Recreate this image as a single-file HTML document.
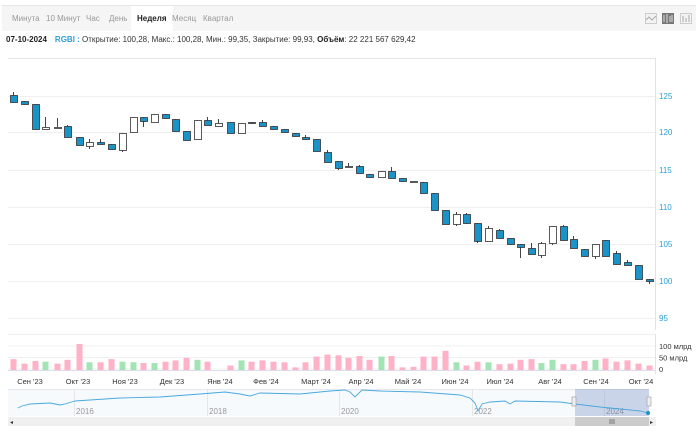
<!DOCTYPE html>
<html><head><meta charset="utf-8"><style>
body{margin:0;width:700px;height:432px;background:#fff;font-family:"Liberation Sans",sans-serif;overflow:hidden;position:relative}
.tabs{position:absolute;left:2px;top:5px;width:694px;height:25px;background:#f5f5f5;border-top:1px solid #e6e6e6}
.tabs span{position:absolute;top:8px;font-size:8px;color:#999}
.tabs span.a{background:#fff;color:#222;font-weight:bold;top:0;height:17px;padding:8px 6px 0;margin-left:-6px}
.info{position:absolute;left:6px;top:35px;font-size:8px;color:#333}
.info b{color:#222}
.info .t{color:#2aa0d8;font-weight:bold;margin-left:8px}
</style></head><body>
<div class="tabs">
<span style="left:10px">Минута</span><span style="left:44px">10 Минут</span><span style="left:84px">Час</span><span style="left:107px">День</span><span class="a" style="left:135px">Неделя</span><span style="left:170px">Месяц</span><span style="left:201px">Квартал</span>
<svg style="position:absolute;left:643px;top:7px" width="50" height="12">
<rect x="0.5" y="0.5" width="11" height="10" fill="#f3f3f3" stroke="#ccc"/><path d="M1 7 L4 4 L7 7 L11 3" fill="none" stroke="#aaa"/>
<rect x="17" y="0" width="12" height="11" fill="#777"/><path d="M19 2v7M22 1v9M25 3v6M27 2v7" stroke="#ddd"/>
<rect x="35.5" y="0.5" width="11" height="10" fill="#f3f3f3" stroke="#ccc"/><path d="M38 3v6M41 5v4M44 2v7" stroke="#aaa"/>
</svg>
</div>
<div class="info"><b>07-10-2024</b><span class="t">RGBI :</span> Открытие: 100,28, Макс.: 100,28, Мин.: 99,35, Закрытие: 99,93, <b>Объём</b>: 22 221 567 629,42</div>
<svg id="c" style="position:absolute;left:0;top:0" width="700" height="432" font-family="Liberation Sans, sans-serif"></svg>
<script>
var s='';
s+='<line x1="8" y1="58.5" x2="655" y2="58.5" stroke="#e6e6e6"/>';
s+='<line x1="655.5" y1="58" x2="655.5" y2="330" stroke="#d8e4f0"/>';
var lv=[[125,96],[120,132],[115,170],[110,207],[105,244],[100,281],[95,318]];
lv.forEach(function(l){s+='<line x1="8" y1="'+l[1]+'.5" x2="655" y2="'+l[1]+'.5" stroke="#efefef"/><text x="659" y="'+(l[1]+3)+'" font-size="8" fill="#2aa0d8">'+l[0]+'</text>';});
var C=[[13,95,102,92,102,1],[24,101,104,101,104,1],[35,104,129,104,129,1],[45,127,129,117,129,0],[57,127,127.5,118,127,2],[67,126,137,125,137,1],[79,137,145,137,145,1],[89,142,146,139,149,0],[100,142,144,139,144,1],[111,144,149,144,149,1],[122,133,150,133,152,0],[133,117,132,117,132,0],[143,117,121,117,127,1],[154,114,122,114,122,0],[165,114,118,114,118,1],[175,119,131,119,131,1],[186,131,140,131,140,1],[197,120,139,120,139,0],[207,120,125,117,125,1],[218,123,126,119,126,0],[230,122,133,122,133,1],[241,123,133,123,133,0],[251,122,123,122,123,1],[262,122,126,120,126,1],[273,126,129,126,129,1],[284,129,132,129,132,1],[295,133,136,133,136,1],[305,137,139,135,139,1],[316,139,151,139,151,1],[327,152,162,150,162,1],[338,161,168,161,170,1],[348,166,167,163,167,2],[359,166,173,165,173,1],[369,174,177,174,177,1],[381,171,177,171,177,0],[391,171,178,167,178,1],[402,178,181,178,181,1],[413,181,182,181,182,2],[423,182,193,182,193,1],[434,193,210,193,210,1],[445,210,224,210,224,1],[456,214,224,212,226,0],[466,214,223,213,224,1],[477,223,241,223,243,1],[488,228,241,226,241,0],[499,230,238,229,238,1],[510,238,244,238,244,1],[520,244,247,244,258,1],[531,248,254,243,254,1],[541,243,255,242,258,0],[552,226,243,226,245,0],[563,226,240,225,240,1],[573,239,248,236,248,1],[584,249,256,249,256,1],[595,244,256,244,259,0],[605,240,256,240,256,1],[616,253,264,251,264,1],[627,262,265,260,265,1],[638,265,279,265,279,1],[649,279,281,279,284,1]];
C.forEach(function(c){var x=c[0];s+='<line x1="'+(x+0.5)+'" y1="'+c[3]+'" x2="'+(x+0.5)+'" y2="'+c[4]+'" stroke="#444"/>';
var h=Math.max(c[2]-c[1],1);s+='<rect x="'+(x-3)+'.5" y="'+c[1]+'.5" width="7" height="'+h+'" fill="'+(c[5]==1?'#1a93c8':'#fff')+'" stroke="#333" stroke-width="0.8"/>';});
s+='<line x1="8" y1="334.5" x2="655" y2="334.5" stroke="#eee"/><line x1="655.5" y1="334" x2="655.5" y2="374" stroke="#d8e4f0"/>';
[[346,'100 млрд'],[357.5,'50 млрд'],[369,'0']].forEach(function(l){s+='<line x1="8" y1="'+l[0]+'" x2="655" y2="'+l[0]+'" stroke="#f0f0f0"/><text x="659" y="'+(l[0]+3)+'" font-size="7.5" fill="#333">'+l[1]+'</text>';});
var V=[10.9,6.4,9,8.3,6.4,10.2,26,7.7,7.7,10.9,8.3,7.7,7,7,8.3,9.6,12.2,10.2,8.3,0,4.5,9.6,8.3,9.6,8.3,7.7,2.6,7.7,13.4,15.4,14.7,12.2,14,10.2,13.4,14,2.6,3.2,13.4,13.4,19.2,7.7,4.5,8.3,7.7,5.8,6.4,10.2,10.9,7,10.2,5.8,5.8,9,10.2,11.5,8.3,9.6,6.4,4.5];
V.forEach(function(h,i){var c=C[i];var col=c[5]==0?'#a2e4b3':'#ffb2c7';s+='<rect x="'+(c[0]-2.5)+'" y="'+(370-h)+'" width="6" height="'+h+'" fill="'+col+'"/>';});
s+='<line x1="8" y1="370.5" x2="655" y2="370.5" stroke="#dde"/>';
var M=[[30,"Сен '23"],[78,"Окт '23"],[125,"Ноя '23"],[172,"Дек '23"],[220,"Янв '24"],[266,"Фев '24"],[316,"Март '24"],[361,"Апр '24"],[408,"Май '24"],[455,"Июн '24"],[500,"Июл '24"],[550,"Авг '24"],[596,"Сен '24"],[641,"Окт '24"]];
M.forEach(function(m){s+='<text x="'+m[0]+'" y="384" font-size="7.5" fill="#333" text-anchor="middle">'+m[1]+'</text>';});
s+='<rect x="8" y="389" width="641" height="27" fill="#f6fafd"/><line x1="8" y1="389.5" x2="649" y2="389.5" stroke="#e4e8ee"/>';
[[74,2016],[207,2018],[339,2020],[472,2022],[604,2024]].forEach(function(y){s+='<line x1="'+y[0]+'.5" y1="389" x2="'+y[0]+'.5" y2="416" stroke="#e6e6e6"/><text x="'+(y[0]+2)+'" y="414" font-size="8" fill="#999">'+y[1]+'</text>';});
s+='<rect x="575" y="389" width="74" height="27" fill="rgba(100,125,190,0.3)"/>';
s+='<polyline fill="none" stroke="#4aa8dc" stroke-width="0.9" points="18,408 22,406 30,404 50,403 60,405 65,404 75,401 90,400 120,398 160,397 200,394 225,392 240,394 250,396 260,393 300,394 330,391 345,390 350,392 355,397 362,390 380,391 420,392 460,395 470,398 475,403 478,411 482,404 490,402 505,401 510,404 515,401 560,402 575,404 600,407 620,409 640,411 648,413"/>';
s+='<circle cx="648" cy="413" r="2" fill="#1a93c8"/>';
s+='<rect x="572" y="397" width="4" height="9" fill="#eee" stroke="#999" stroke-width="0.6"/><rect x="647" y="397" width="4" height="9" fill="#eee" stroke="#999" stroke-width="0.6"/>';
s+='<rect x="8" y="417" width="648" height="9" fill="#f0f0f0"/><rect x="575" y="417" width="74" height="9" fill="#ccc"/>';
s+='<text x="10" y="424" font-size="6" fill="#333">◂</text><text x="650" y="424" font-size="6" fill="#333">▸</text><path d="M610 419v5M612 419v5M614 419v5" stroke="#444" stroke-width="0.6"/>';
document.getElementById('c').innerHTML=s;
</script>
</body></html>
